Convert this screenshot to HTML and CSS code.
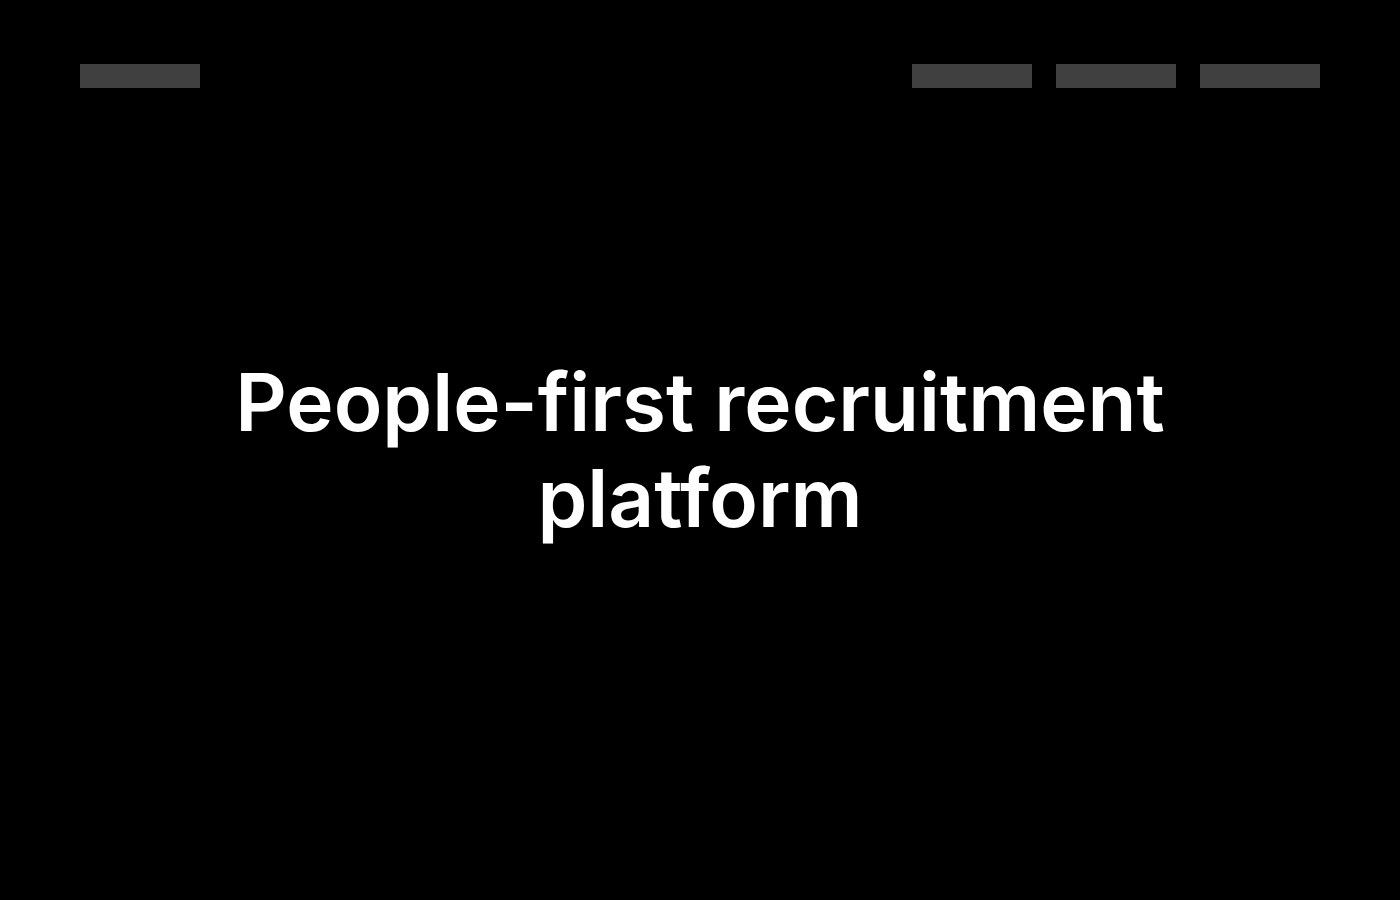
FILE: index.html
```html
<!DOCTYPE html>
<html lang="en">
<head>
<meta charset="utf-8">
<title>People-first recruitment platform</title>
<link rel="stylesheet" href="styles.css">
</head>
<body>
<div class="page">
  <header class="header">
    <div class="bar"></div>
    <nav class="nav">
      <div class="bar"></div>
      <div class="bar"></div>
      <div class="bar"></div>
    </nav>
  </header>
  <main class="hero">
    <h1 class="title">People-first recruitment<br>platform</h1>
  </main>
</div>
</body>
</html>
```
FILE: styles.css
```css
html, body {
  margin: 0;
  padding: 0;
  background: #000;
}
body {
  font-family: Inter, "Noto Sans", sans-serif;
  color: #fff;
}
.page {
  height: 100vh;
  display: flex;
  flex-direction: column;
}
.header {
  display: flex;
  justify-content: space-between;
  padding: 64px 80px;
}
.nav {
  display: flex;
  gap: 24px;
}
.bar {
  width: 120px;
  height: 24px;
  background: #404040;
}
.hero {
  flex: 1;
  display: flex;
  align-items: center;
  justify-content: center;
  padding-bottom: 152px;
}
.title {
  margin: 0;
  font-size: 80px;
  line-height: 96px;
  font-weight: 600;
  text-align: center;
}
```
